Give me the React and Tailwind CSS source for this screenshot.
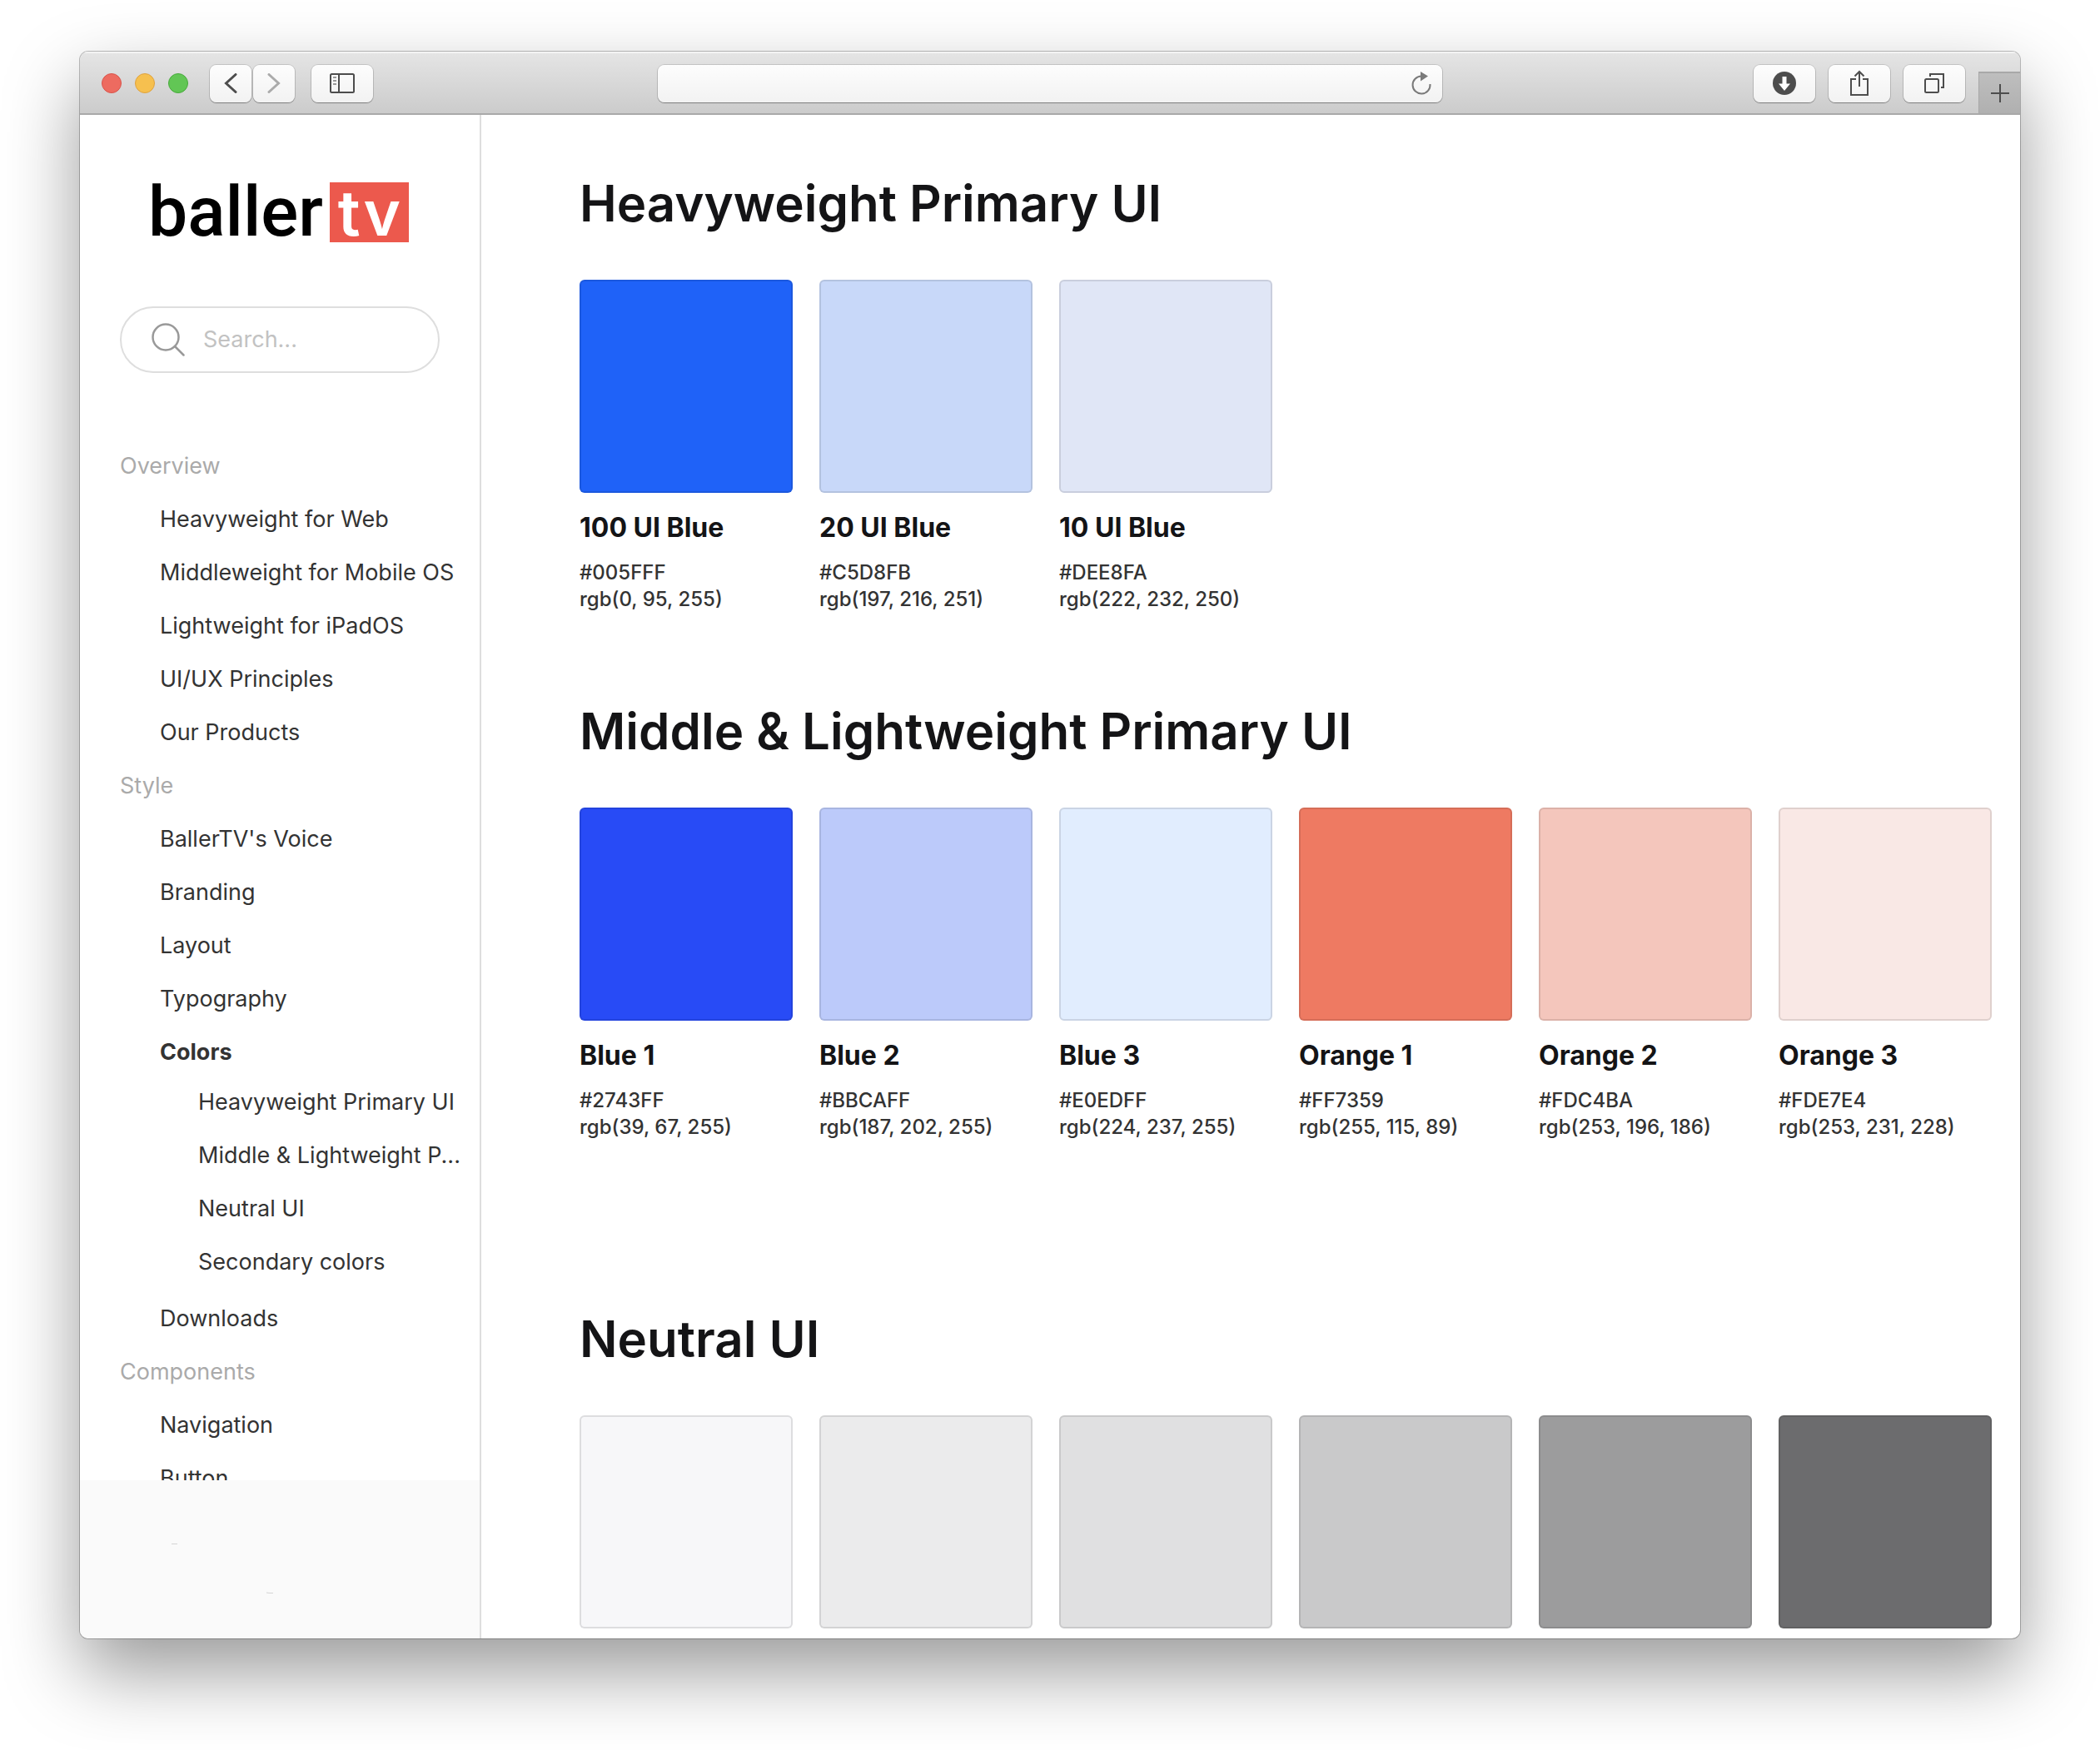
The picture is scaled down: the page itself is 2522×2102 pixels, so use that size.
const nav = [
  {
    title: "Overview",
    items: ["Heavyweight for Web", "Middleweight for Mobile OS", "Lightweight for iPadOS", "UI/UX Principles", "Our Products"],
  },
  {
    title: "Style",
    items: ["BallerTV's Voice", "Branding", "Layout", "Typography", "Colors", "Downloads"],
  },
  { title: "Components", items: ["Navigation", "Button"] },
];

const colorPages = ["Heavyweight Primary UI", "Middle & Lightweight P...", "Neutral UI", "Secondary colors"];

const heavyweight = [
  { name: "100 UI Blue", hex: "#005FFF", rgb: "rgb(0, 95, 255)", fill: "bg-[#1f62f8]" },
  { name: "20 UI Blue", hex: "#C5D8FB", rgb: "rgb(197, 216, 251)", fill: "bg-[#c8d8f9]" },
  { name: "10 UI Blue", hex: "#DEE8FA", rgb: "rgb(222, 232, 250)", fill: "bg-[#e0e6f6]" },
];

const middleweight = [
  { name: "Blue 1", hex: "#2743FF", rgb: "rgb(39, 67, 255)", fill: "bg-[#284bf6]" },
  { name: "Blue 2", hex: "#BBCAFF", rgb: "rgb(187, 202, 255)", fill: "bg-[#bccafa]" },
  { name: "Blue 3", hex: "#E0EDFF", rgb: "rgb(224, 237, 255)", fill: "bg-[#e1edfe]" },
  { name: "Orange 1", hex: "#FF7359", rgb: "rgb(255, 115, 89)", fill: "bg-[#ee7a62]" },
  { name: "Orange 2", hex: "#FDC4BA", rgb: "rgb(253, 196, 186)", fill: "bg-[#f4c6bc]" },
  { name: "Orange 3", hex: "#FDE7E4", rgb: "rgb(253, 231, 228)", fill: "bg-[#f9e8e5]" },
];

const neutral = [
  { fill: "bg-[#f7f7f9]" },
  { fill: "bg-[#ebebec]" },
  { fill: "bg-[#e0e0e1]" },
  { fill: "bg-[#c9c9ca]" },
  { fill: "bg-[#9c9c9d]" },
  { fill: "bg-[#6c6c6e]" },
];

const toolButton =
  "flex h-[45px] items-center justify-center rounded-lg bg-linear-to-b from-[#fdfdfd] to-[#f2f2f2] shadow-[0_0_0_1px_rgba(0,0,0,0.13),0_1px_1px_rgba(0,0,0,0.3)]";

function Toolbar() {
  return (
    <header className="flex h-[76px] shrink-0 items-center bg-linear-to-b from-[#e5e5e5] to-[#cbcbcb] shadow-[inset_0_2px_0_#f3f3f3,inset_0_-2px_0_#a9a9a9]">
      <div className="flex flex-1 items-center">
        <div className="ml-[26px] flex gap-4">
          <button aria-label="Close" className="size-6 rounded-full border border-[#d9544b] bg-[#ed6b60]" />
          <button aria-label="Minimize" className="size-6 rounded-full border border-[#dfa23e] bg-[#f6c04f]" />
          <button aria-label="Zoom" className="size-6 rounded-full border border-[#48aa3c] bg-[#62c655]" />
        </div>
        <div className="ml-[26px] flex gap-[2px]">
          <button aria-label="Back" className={`${toolButton} w-[50px]`}>
            <svg width="24" height="24" fill="none" stroke="#4d4d4d" strokeWidth="3" strokeLinecap="round">
              <path d="M18 1.500 6.500 12 18 22.500" />
            </svg>
          </button>
          <button aria-label="Forward" className={`${toolButton} w-[50px]`}>
            <svg width="24" height="24" fill="none" stroke="#ababab" strokeWidth="3" strokeLinecap="round">
              <path d="M6 1.500 17.500 12 6 22.500" />
            </svg>
          </button>
        </div>
        <button aria-label="Show sidebar" className={`${toolButton} ml-5 w-[74px]`}>
          <svg width="30" height="24" fill="none" stroke="#4d4d4d" strokeWidth="2">
            <rect x="1" y="1" width="28" height="22" rx="1.500" />
            <path d="M11 1v22" />
            <path d="M4 5h4M4 9h4M4 13h4" stroke="#999" />
          </svg>
        </button>
      </div>
      <div className={`${toolButton} w-[942px]`}>
        <input aria-label="Address" className="h-full min-w-0 flex-1 bg-transparent px-4 text-2xl outline-none" />
        <button aria-label="Reload" className="mr-[12px]">
          <svg width="26" height="28" fill="none">
            <path d="M23.500 15A10.500 10.500 0 1 1 13 5.500" stroke="#7a7a7a" strokeWidth="2" />
            <path d="M12 0v11.500l9-6z" fill="#7a7a7a" />
          </svg>
        </button>
      </div>
      <div className="flex h-full flex-1 items-center justify-end gap-4">
        <button aria-label="Downloads" className={`${toolButton} w-[74px]`}>
          <svg width="28" height="28">
            <circle cx="14" cy="14" r="14" fill="#4d4d4d" />
            <path d="M11.500 6h5v8.500H21L14 23 7 14.500h4.500z" fill="#fff" />
          </svg>
        </button>
        <button aria-label="Share" className={`${toolButton} w-[74px]`}>
          <svg width="24" height="32" fill="none" stroke="#4d4d4d" strokeWidth="2">
            <path d="M8 11H2v19h20V11h-6" />
            <path d="M12 20V2M6.500 7.500 12 2l5.500 5.500" />
          </svg>
        </button>
        <button aria-label="Show all tabs" className={`${toolButton} w-[74px]`}>
          <svg width="26" height="26" fill="none" stroke="#4d4d4d" strokeWidth="2">
            <rect x="2" y="8" width="16" height="16" rx="1.500" />
            <path d="M8 5V2h16v16h-3" />
          </svg>
        </button>
        <button
          aria-label="New tab"
          className="mb-[2px] flex h-[50px] w-[50px] items-center justify-center self-end border-t-2 border-l border-[#a8a8a8] bg-linear-to-b from-[#bebebe] to-[#b0b0b0]"
        >
          <svg width="22" height="22" stroke="#4d4d4d" strokeWidth="2">
            <path d="M11 0v22M0 11h22" />
          </svg>
        </button>
      </div>
    </header>
  );
}

function NavItem({ label }) {
  const active = label === "Colors";
  return (
    <li>
      <a href="#" aria-current={active ? "page" : undefined} className={active ? "font-bold" : ""}>
        {label}
      </a>
      {active && (
        <ul className="-mt-1 -mr-4 mb-1 pl-[46px]">
          {colorPages.map((page) => (
            <li key={page}>
              <a href="#">{page}</a>
            </li>
          ))}
        </ul>
      )}
    </li>
  );
}

function Sidebar() {
  return (
    <aside className="flex w-[482px] shrink-0 flex-col border-r-2 border-[#dedede]">
      <a
        href="#"
        aria-label="ballertv"
        className="mt-[81px] flex items-center gap-2 self-start pl-[82px] font-['Roboto',sans-serif] text-[84px] leading-[72px] font-medium text-black"
      >
        <span>baller</span>
        <span className="flex h-[72px] w-[95px] items-center justify-center gap-1 bg-[#ec594d] font-['Inter',sans-serif] text-[76px] font-semibold text-white">
          <span>t</span>
          <span>v</span>
        </span>
      </a>
      <label className="mx-12 mt-[77px] flex h-20 items-center gap-[22px] rounded-full border-2 border-[#dedede] pl-9">
        <svg width="40" height="40" className="shrink-0" fill="none" stroke="#999" strokeWidth="2.500" strokeLinecap="round">
          <circle cx="17" cy="17" r="15.500" />
          <path d="m28 28 10.500 10.500" />
        </svg>
        <input
          type="search"
          aria-label="Search"
          placeholder="Search..."
          className="min-w-0 flex-1 bg-transparent text-[27px] outline-none placeholder:text-[#c2c2c2]"
        />
      </label>
      <nav className="mt-20 min-h-0 flex-1 overflow-hidden pr-8 pl-12 text-[27px] leading-[64px] whitespace-nowrap text-[#333]">
        {nav.map((group) => (
          <section key={group.title}>
            <h2 className="text-[#aaa]">{group.title}</h2>
            <ul className="pl-12">
              {group.items.map((item) => (
                <NavItem key={item} label={item} />
              ))}
            </ul>
          </section>
        ))}
      </nav>
      <footer className="h-[190px] shrink-0 bg-[#fafafa]">
        <svg width="100%" height="100%" fill="none" stroke="#d4d4d4">
          <path d="M110 76.500h7M224 135l4 .5M228 135.500h4" />
        </svg>
      </footer>
    </aside>
  );
}

function Palette({ title, swatches }) {
  return (
    <section>
      <h1 className="text-[60px] leading-[80px] font-semibold text-[#141416]">{title}</h1>
      <ul className="mt-[52px] grid grid-cols-6 gap-8">
        {swatches.map((s) => (
          <li key={s.fill}>
            <div className={`aspect-square rounded-md border-2 border-black/10 ${s.fill}`} />
            {s.name && (
              <>
                <h3 className="mt-[22px] text-[32px] leading-10 font-bold text-[#141416]">{s.name}</h3>
                <p className="mt-[18px] text-2xl leading-8 font-medium text-[#333]">
                  {s.hex}
                  <br />
                  {s.rgb}
                </p>
              </>
            )}
          </li>
        ))}
      </ul>
    </section>
  );
}

export default function App() {
  return (
    <div className="flex h-screen flex-col overflow-hidden bg-white px-24 pt-[62px] pb-[134px] font-['Inter',sans-serif]">
      <div className="flex min-h-0 flex-1 flex-col overflow-hidden rounded-[10px] bg-white shadow-[0_0_0_1px_rgba(0,0,0,0.25),0_40px_90px_rgba(0,0,0,0.4)]">
        <Toolbar />
        <div className="flex min-h-0 flex-1">
          <Sidebar />
          <main className="min-w-0 flex-1 overflow-hidden pt-[66px] pr-[34px] pl-[118px]">
            <Palette title="Heavyweight Primary UI" swatches={heavyweight} />
            <div className="mt-[102px]">
              <Palette title="Middle & Lightweight Primary UI" swatches={middleweight} />
            </div>
            <div className="mt-[198px]">
              <Palette title="Neutral UI" swatches={neutral} />
            </div>
          </main>
        </div>
      </div>
    </div>
  );
}
